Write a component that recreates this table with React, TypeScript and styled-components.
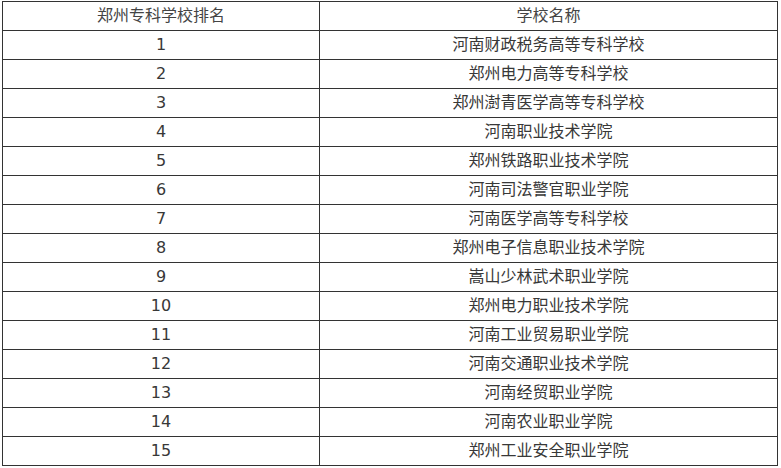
import React from 'react'
import styled, { createGlobalStyle } from 'styled-components'

const GlobalStyle = createGlobalStyle`
  * {
    box-sizing: border-box;
  }
  html, body {
    margin: 0;
    padding: 0;
    background: #ffffff;
  }
  body {
    font-family: "DejaVu Sans", "Noto Sans CJK SC", sans-serif;
    color: #333333;
  }
`

const Page = styled.div`
  padding: 1px 0 0 2px;
`

const Table = styled.table`
  border-collapse: collapse;
  width: 776px;
  table-layout: fixed;
  font-size: 16px;
`

const Cell = styled.td<{ $head?: boolean }>`
  border: 1px solid #333333;
  height: 29px;
  padding: 0;
  text-align: center;
  vertical-align: middle;
  line-height: 20px;
  color: ${props => props.$head ? '#444444' : '#383838'};
`

const schools = [
  '河南财政税务高等专科学校',
  '郑州电力高等专科学校',
  '郑州澍青医学高等专科学校',
  '河南职业技术学院',
  '郑州铁路职业技术学院',
  '河南司法警官职业学院',
  '河南医学高等专科学校',
  '郑州电子信息职业技术学院',
  '嵩山少林武术职业学院',
  '郑州电力职业技术学院',
  '河南工业贸易职业学院',
  '河南交通职业技术学院',
  '河南经贸职业学院',
  '河南农业职业学院',
  '郑州工业安全职业学院',
]

export default function App() {
  return (
    <>
      <GlobalStyle />
      <Page>
        <Table>
          <colgroup>
            <col style={{ width: 317 }} />
            <col />
          </colgroup>
          <tbody>
            <tr>
              <Cell $head>郑州专科学校排名</Cell>
              <Cell $head>学校名称</Cell>
            </tr>
            {schools.map((name, i) => (
              <tr key={name}>
                <Cell>{i + 1}</Cell>
                <Cell>{name}</Cell>
              </tr>
            ))}
          </tbody>
        </Table>
      </Page>
    </>
  )
}
